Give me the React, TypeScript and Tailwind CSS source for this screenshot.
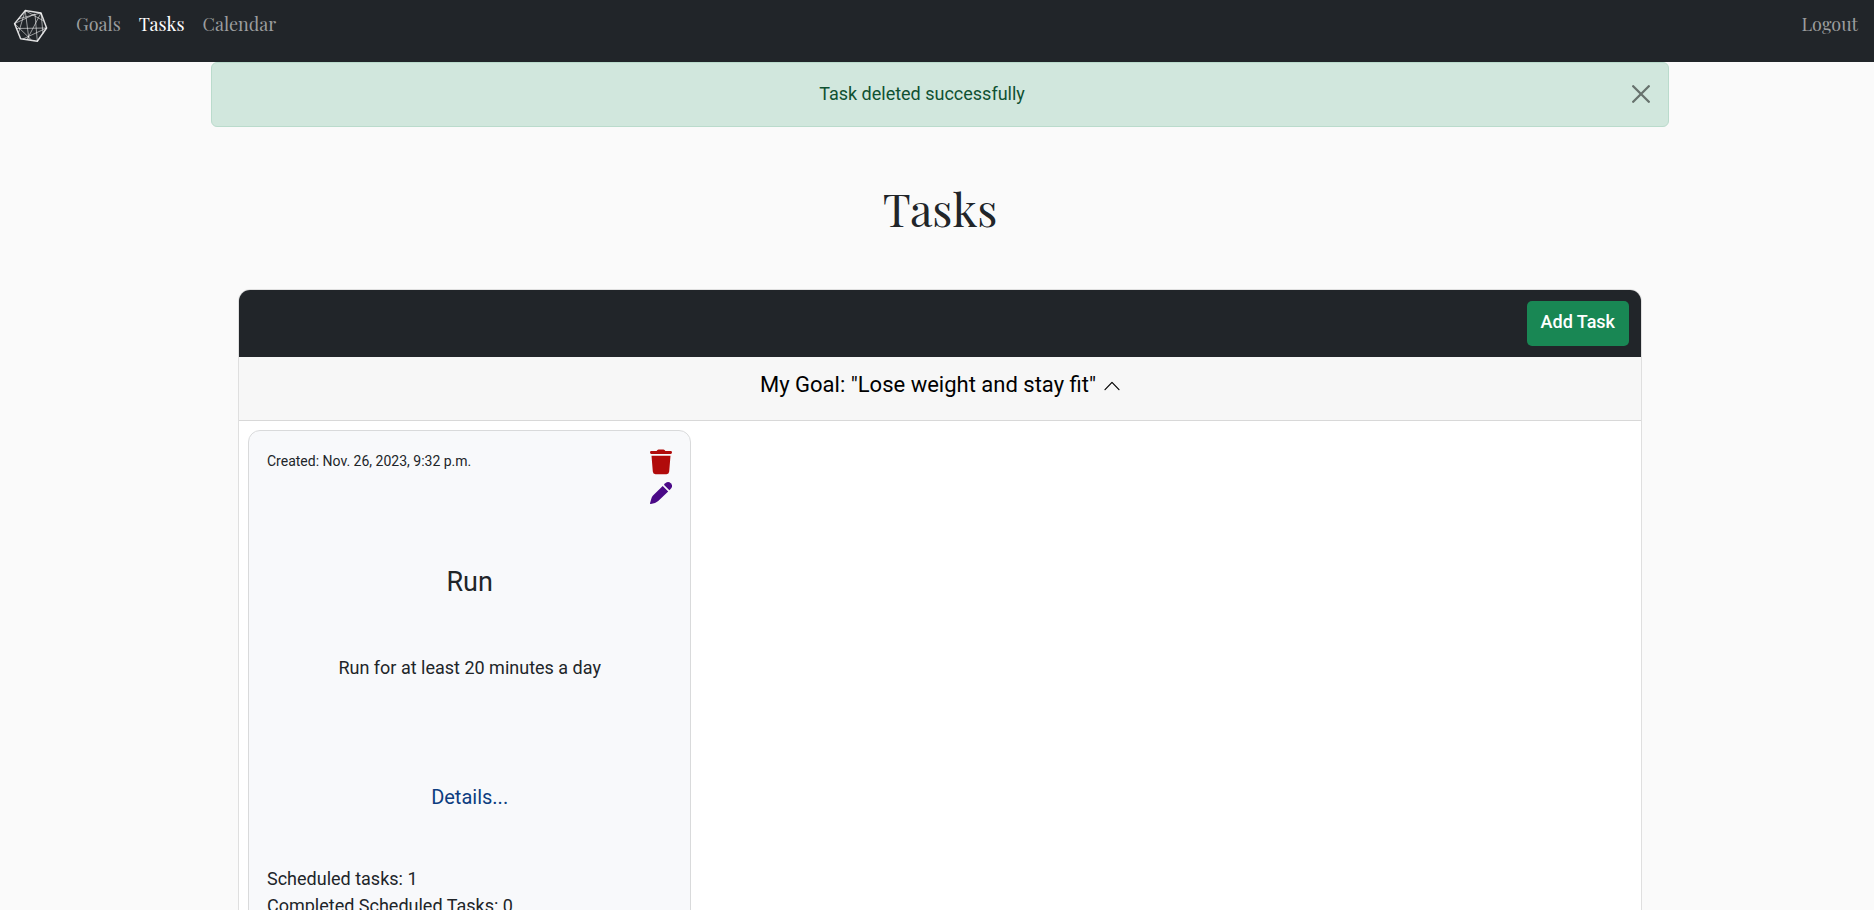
import React, { useState } from "react";

const serif = "font-['Playfair_Display','Liberation_Serif',serif]";

function Logo() {
  return (
    <svg viewBox="0 0 36 34" className="h-[34px] w-9" fill="none" stroke="#fff" strokeLinejoin="round" aria-hidden="true">
      <path d="M12.2 1.6 28 3.9 33.6 19 24.3 32.2 7.6 29.8 1.6 14.6Z" strokeWidth="1.5" strokeOpacity=".85" />
      <g strokeWidth="1" strokeOpacity=".55">
        <path d="M12.2 1.6 5.6 23.5M12.2 1.6 30.4 11.8M28 3.9 14 30.6M28 3.9 5 10M28 3.9 30 24.5" />
        <path d="M1.6 14.6 22 5M1.6 14.6 18.5 31M3 19.5 33.6 19M33.6 19 10 30M12.2 1.6 16 30.8M22 5 24.3 32.2" />
      </g>
    </svg>
  );
}

function TrashIcon() {
  return (
    <svg viewBox="0 0 22 26" className="h-[26px] w-[22px]" fill="#b10b0b" aria-hidden="true">
      <path d="M1.3 2.1H6.6Q7.3.4 8.5.4H13.5Q14.7.4 15.4 2.1H20.7Q22 2.1 22 3.5T20.7 4.9H1.3Q0 4.9 0 3.5T1.3 2.1Z" />
      <path d="M1.5 6.7H20.5L19.2 22.6Q19 25.2 16.5 25.2H5.5Q3 25.2 2.8 22.6Z" />
    </svg>
  );
}

function PencilIcon() {
  return (
    <svg viewBox="0 0 22 22" className="size-[22px]" fill="#4b0a87" aria-hidden="true">
      <path d="M12.7 3.9 18.2 9.4 8.2 19.1Q6.8 20.4 5 20.9L.9 22Q-.1 22.1.1 21.1L1.3 16.8Q1.7 15 3 13.6Z" />
      <path d="M13.9 2.7 15.3 1.3Q18.2-1.2 20.8 1.3T20.8 6.8L19.4 8.2Z" />
    </svg>
  );
}

export default function App() {
  const [alertOpen, setAlertOpen] = useState(true);
  const [goalOpen, setGoalOpen] = useState(true);

  return (
    <div className="min-h-screen bg-[#fafafa] font-[Roboto,sans-serif] text-lg leading-[27px] text-[#212529]">
      <nav className={`flex h-[62px] items-start bg-[#212529] pt-[9px] pr-4 pl-[13px] text-lg leading-[27px] text-[#9b9d9e] ${serif}`}>
        <a href="#home" aria-label="Home">
          <Logo />
        </a>
        <div className="ml-[27px] flex grow gap-[18px] pt-0.5">
          <a href="#goals">Goals</a>
          <a href="#tasks" className="text-white" aria-current="page">Tasks</a>
          <a href="#calendar">Calendar</a>
        </div>
        <a href="#logout" className="pt-0.5">Logout</a>
      </nav>

      <main className="mx-auto max-w-[1464px] pl-1.5">
        {alertOpen && (
          <div role="alert" className="flex items-center rounded-md border border-[#badbcc] bg-[#d1e7dd] px-[18px] pt-[17px] pb-[19px] text-[#0f5132]">
            <p className="grow text-center">Task deleted successfully</p>
            <button type="button" aria-label="Close" className="ml-[18px] opacity-50" onClick={() => setAlertOpen(false)}>
              <svg viewBox="0 0 18 18" className="size-[18px]" stroke="#000" strokeWidth="2.3" strokeLinecap="round" aria-hidden="true">
                <path d="M1.2 1.2 16.8 16.8M16.8 1.2 1.2 16.8" />
              </svg>
            </button>
          </div>
        )}

        <h1 className={`py-[54px] text-center text-[45px] leading-[54px] ${serif}`}>Tasks</h1>

        <section className="mx-[27px] overflow-hidden rounded-t-xl border border-[#dfdfdf] bg-white">
          <header className="flex justify-end bg-[#212529] px-3 py-[11px]">
            <button type="button" className="h-[45px] rounded-[5px] bg-[#198754] px-[14px] pb-1 font-medium text-white">Add Task</button>
          </header>
          <div className="flex h-[64px] justify-center border-b border-[#d8d8d8] bg-[#f7f7f7] pt-[11px]">
            <button
              type="button"
              className="flex h-8 items-center gap-2 text-[22px] text-black"
              aria-expanded={goalOpen}
              onClick={() => setGoalOpen(!goalOpen)}
            >
              My Goal: "Lose weight and stay fit"
              <svg viewBox="0 0 16 10" className="mt-1 h-[10px] w-4" fill="none" stroke="#000" strokeWidth="1.2" strokeLinecap="round" strokeLinejoin="round" aria-hidden="true">
                <path d="M1 8.6 8 1.4 15 8.6" />
              </svg>
            </button>
          </div>
          {goalOpen && (
            <div className="grid grid-cols-3 gap-[27px] p-[9px]">
              <article className="rounded-xl border border-[#d9dadb] bg-[#f8f9fb] p-[18px]">
                <div className="flex h-20 justify-between">
                  <p className="text-sm leading-6">Created: Nov. 26, 2023, 9:32 p.m.</p>
                  <div className="flex flex-col items-end gap-[7px]">
                    <button type="button" aria-label="Delete task"><TrashIcon /></button>
                    <button type="button" aria-label="Edit task"><PencilIcon /></button>
                  </div>
                </div>
                <h2 className="pt-[35px] text-center text-[27px] leading-9">Run</h2>
                <p className="pt-[54px] text-center">Run for at least 20 minutes a day</p>
                <p className="pt-[101px] text-center text-xl leading-[30px]">
                  <a href="#details" className="text-[#0d3d80]">Details...</a>
                </p>
                <div className="pt-[53px]">
                  <p>Scheduled tasks: 1</p>
                  <p>Completed Scheduled Tasks: 0</p>
                </div>
              </article>
            </div>
          )}
        </section>
      </main>
    </div>
  );
}
